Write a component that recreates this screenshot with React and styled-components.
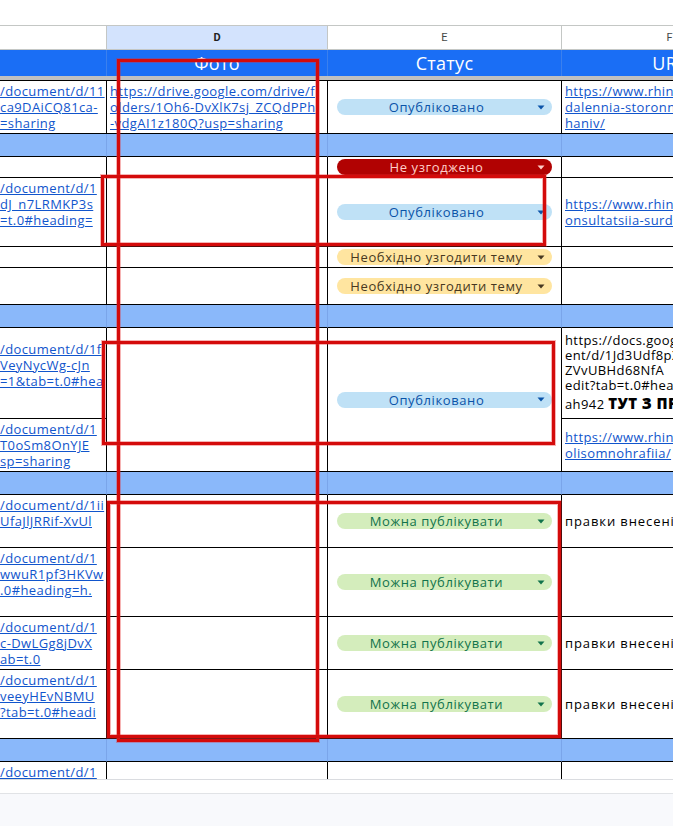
import React from "react";
import styled, { createGlobalStyle } from "styled-components";

const FONT = `"Open Sans", "Noto Sans", "DejaVu Sans", sans-serif`;
const COLS = "107px 221px 234px 216px";

const GlobalStyle = createGlobalStyle`
    * {
        box-sizing: border-box;
    }
    html,
    body {
        margin: 0;
        padding: 0;
        background: #fff;
    }
    body {
        font-family: ${FONT};
    }
`;

const PILLS = {
    blue: { bg: "#bfe1f6", fg: "#0a53a8" },
    red: { bg: "#b10202", fg: "#ffcfc9" },
    yellow: { bg: "#ffe5a0", fg: "#473821" },
    green: { bg: "#d4edbc", fg: "#11734b" },
};

// null in a line list = a wrapped line that is hidden beyond the left edge
const rows = [
    {
        h: 53,
        c: ["/document/d/11", "ca9DAiCQ81ca-", "=sharing"],
        d: ["https://drive.google.com/drive/f", "olders/1Oh6-DvXlK7sj_ZCQdPPh", "-vdgAI1z180Q?usp=sharing"],
        e: { kind: "blue", text: "Опубліковано" },
        f: { links: ["https://www.rhinolab.ua/vy", "dalennia-storonnikh-til-z-", "haniv/"] },
    },
    { sep: true, h: 23 },
    { h: 21, e: { kind: "red", text: "Не узгоджено" } },
    {
        h: 69,
        c: ["/document/d/1", "dJ_n7LRMKP3s", "=t.0#heading=", null],
        e: { kind: "blue", text: "Опубліковано" },
        f: { links: ["https://www.rhinolab.ua/k", "onsultatsiia-surdoloha/"] },
    },
    { h: 21, e: { kind: "yellow", text: "Необхідно узгодити тему" } },
    { h: 37, e: { kind: "yellow", text: "Необхідно узгодити тему" } },
    { sep: true, h: 23 },
    {
        h: 91,
        c: ["/document/d/1f", "VeyNycWg-cJn", "=1&tab=t.0#hea", null],
        span: 2,
        e: { kind: "blue", text: "Опубліковано" },
        f: { note: true },
    },
    {
        h: 53,
        c: ["/document/d/1", "T0oSm8OnYJE", "sp=sharing"],
        merged: true,
        f: { links: ["https://www.rhinolab.ua/p", "olisomnohrafiia/"] },
    },
    { sep: true, h: 23 },
    {
        h: 53,
        c: ["/document/d/1ii", "UfaJlJRRif-XvUl", null],
        e: { kind: "green", text: "Можна публікувати" },
        f: { text: "правки внесені" },
    },
    {
        h: 69,
        c: ["/document/d/1", "wwuR1pf3HKVw", ".0#heading=h.", null],
        e: { kind: "green", text: "Можна публікувати" },
    },
    {
        h: 53,
        c: ["/document/d/1", "c-DwLGg8jDvX", "ab=t.0"],
        e: { kind: "green", text: "Можна публікувати" },
        f: { text: "правки внесені" },
    },
    {
        h: 69,
        c: ["/document/d/1", "veeyHEvNBMU", "?tab=t.0#headi", null],
        e: { kind: "green", text: "Можна публікувати" },
        f: { text: "правки внесені" },
    },
    { sep: true, h: 23 },
    { h: 53, c: ["/document/d/1", "eK2pQx7", null] },
];

const marks = [
    { left: 117, top: 59, width: 202, height: 683 },
    { left: 101, top: 175, width: 445, height: 71 },
    { left: 102, top: 341, width: 453, height: 104 },
    { left: 107, top: 501, width: 454, height: 237 },
];

function Caret() {
    return (
        <CaretIcon viewBox="0 0 8 5" width="8" height="5">
            <path d="M0.5 0.5 L7.5 0.5 L4 4.5 Z" fill="currentColor" />
        </CaretIcon>
    );
}

function StatusChip({ kind, text }) {
    return (
        <Chip $kind={kind}>
            <ChipLabel>{text}</ChipLabel>
            <Caret />
        </Chip>
    );
}

function Links({ lines }) {
    return lines.map((l, i) => (l === null ? <HiddenLine key={i} /> : <LinkLine key={i}>{l}</LinkLine>));
}

function App() {
    const cells = [];
    rows.forEach((r, i) => {
        const row = i + 1;
        if (r.sep) {
            for (let col = 1; col <= 4; col++) {
                cells.push(<SepCell key={`${row}-${col}`} $row={row} $col={col} />);
            }
            return;
        }
        cells.push(
            <Cell key={`${row}-c`} $row={row} $col={1} $pad="0">
                {r.c && <Links lines={r.c} />}
            </Cell>
        );
        if (!r.merged) {
            cells.push(
                <Cell key={`${row}-d`} $row={row} $col={2} $span={r.span}>
                    {r.d && <Links lines={r.d} />}
                </Cell>
            );
            cells.push(
                <Cell key={`${row}-e`} $row={row} $col={3} $span={r.span} $pad="0 9px">
                    {r.e && <StatusChip kind={r.e.kind} text={r.e.text} />}
                </Cell>
            );
        }
        cells.push(
            <Cell key={`${row}-f`} $row={row} $col={4}>
                {r.f && r.f.links && <Links lines={r.f.links} />}
                {r.f && r.f.text && <PlainLine>{r.f.text}</PlainLine>}
                {r.f && r.f.note && (
                    <>
                        <NoteLine>https://docs.google.com/docum</NoteLine>
                        <NoteLine>ent/d/1Jd3Udf8pXkRw</NoteLine>
                        <NoteLine>ZVvUBHd68NfA</NoteLine>
                        <NoteLine>edit?tab=t.0#heading=h.</NoteLine>
                        <NoteLine $tall>
                            ah942 <strong>ТУТ З ПРАВКАМИ</strong>
                        </NoteLine>
                    </>
                )}
            </Cell>
        );
    });

    return (
        <Page>
            <GlobalStyle />
            <TopBlank />
            <ColumnHeaders>
                <ColLetter />
                <ColLetter $active>D</ColLetter>
                <ColLetter>E</ColLetter>
                <ColLetter>F</ColLetter>
            </ColumnHeaders>
            <TitleRow>
                <TitleCell />
                <TitleCell>Фото</TitleCell>
                <TitleCell>Статус</TitleCell>
                <TitleCell>URL</TitleCell>
            </TitleRow>
            <FreezeBar />
            <DataViewport>
                <DataGrid $rows={rows.map((r) => `${r.h}px`).join(" ")}>{cells}</DataGrid>
            </DataViewport>
            <BottomBar>
                <ScrollStrip />
                <TabStrip />
            </BottomBar>
            {marks.map((m, i) => (
                <Mark key={i} style={{ left: m.left, top: m.top, width: m.width, height: m.height }} />
            ))}
        </Page>
    );
}

export default App;

const Page = styled.div`
    position: relative;
    width: 673px;
    height: 826px;
    overflow: hidden;
    background: #fff;
    display: flex;
    flex-direction: column;
`;
const TopBlank = styled.div`
    height: 25px;
    flex-shrink: 0;
`;
const ColumnHeaders = styled.div`
    display: grid;
    grid-template-columns: ${COLS};
    width: 778px;
    height: 25px;
    flex-shrink: 0;
    border-top: 1px solid #c4c7c5;
    border-bottom: 1px solid #c4c7c5;
`;
const ColLetter = styled.div`
    display: flex;
    align-items: center;
    justify-content: center;
    border-right: 1px solid #c4c7c5;
    font-family: Roboto, "Liberation Sans", sans-serif;
    font-size: 11px;
    font-weight: ${(p) => (p.$active ? 700 : 400)};
    color: ${(p) => (p.$active ? "#1f1f1f" : "#444746")};
    background: ${(p) => (p.$active ? "#d3e3fd" : "#fff")};
    overflow: hidden;
    white-space: nowrap;
`;
const TitleRow = styled.div`
    display: grid;
    grid-template-columns: ${COLS};
    width: 778px;
    height: 26px;
    flex-shrink: 0;
    background: #1a6ef5;
`;
const TitleCell = styled.div`
    border-right: 1px solid #3b80ee;
    color: #fff;
    font-size: 18px;
    line-height: 26px;
    text-align: center;
    white-space: nowrap;
    overflow: hidden;
    letter-spacing: 0.3px;
`;
const FreezeBar = styled.div`
    height: 4px;
    flex-shrink: 0;
    width: 778px;
    background: #c0c0c0;
`;
const DataViewport = styled.div`
    height: 699px;
    flex-shrink: 0;
    overflow: hidden;
    border-top: 1px solid #000;
`;
const DataGrid = styled.div`
    display: grid;
    grid-template-columns: ${COLS};
    grid-template-rows: ${(p) => p.$rows};
    width: 778px;
`;
const Cell = styled.div`
    grid-row: ${(p) => p.$row} / span ${(p) => p.$span || 1};
    grid-column: ${(p) => p.$col};
    display: flex;
    flex-direction: column;
    justify-content: center;
    padding: ${(p) => p.$pad || "0 3px"};
    border-right: 1px solid #000;
    border-bottom: 1px solid #000;
    background: #fff;
    overflow: hidden;
    min-width: 0;
`;
const SepCell = styled.div`
    grid-row: ${(p) => p.$row};
    grid-column: ${(p) => p.$col};
    background: #8ab8fa;
    border-right: 1px solid #7aa5ea;
    border-bottom: 1px solid #000;
`;
const LinkLine = styled.div`
    color: #1155cc;
    text-decoration: underline;
    font-size: 13px;
    line-height: 16px;
    letter-spacing: 0.4px;
    white-space: nowrap;
`;
const HiddenLine = styled.div`
    height: 16px;
    flex-shrink: 0;
`;
const PlainLine = styled.div`
    color: #000;
    font-size: 13px;
    line-height: 16px;
    letter-spacing: 0.9px;
    white-space: nowrap;
`;
const NoteLine = styled.div`
    color: #000;
    font-size: 13px;
    line-height: ${(p) => (p.$tall ? "20px" : "15px")};
    letter-spacing: 0.4px;
    white-space: nowrap;
    strong {
        font-size: 15px;
        font-weight: 800;
    }
`;
const Chip = styled.div`
    display: flex;
    align-items: center;
    gap: 9px;
    height: 16px;
    width: 100%;
    padding: 0 7px 0 8px;
    border-radius: 8px;
    background: ${(p) => PILLS[p.$kind].bg};
    color: ${(p) => PILLS[p.$kind].fg};
    font-size: 13px;
    letter-spacing: 0.6px;
`;
const ChipLabel = styled.span`
    flex: 1;
    text-align: center;
    white-space: nowrap;
    overflow: hidden;
    line-height: 16px;
`;
const CaretIcon = styled.svg`
    display: block;
    flex-shrink: 0;
`;
const BottomBar = styled.div`
    flex: 1;
    display: flex;
    flex-direction: column;
    border-top: 1px solid #dadce0;
`;
const ScrollStrip = styled.div`
    height: 13px;
    background: #fff;
`;
const TabStrip = styled.div`
    flex: 1;
    background: #f8f9fc;
    border-top: 1px solid #e1e3e6;
`;
const Mark = styled.div`
    position: absolute;
    border: 3px solid #d40b0b;
    box-shadow: 0 0 0 1px rgba(230, 40, 40, 0.35), inset 0 0 0 1px rgba(230, 40, 40, 0.35);
    pointer-events: none;
`;
